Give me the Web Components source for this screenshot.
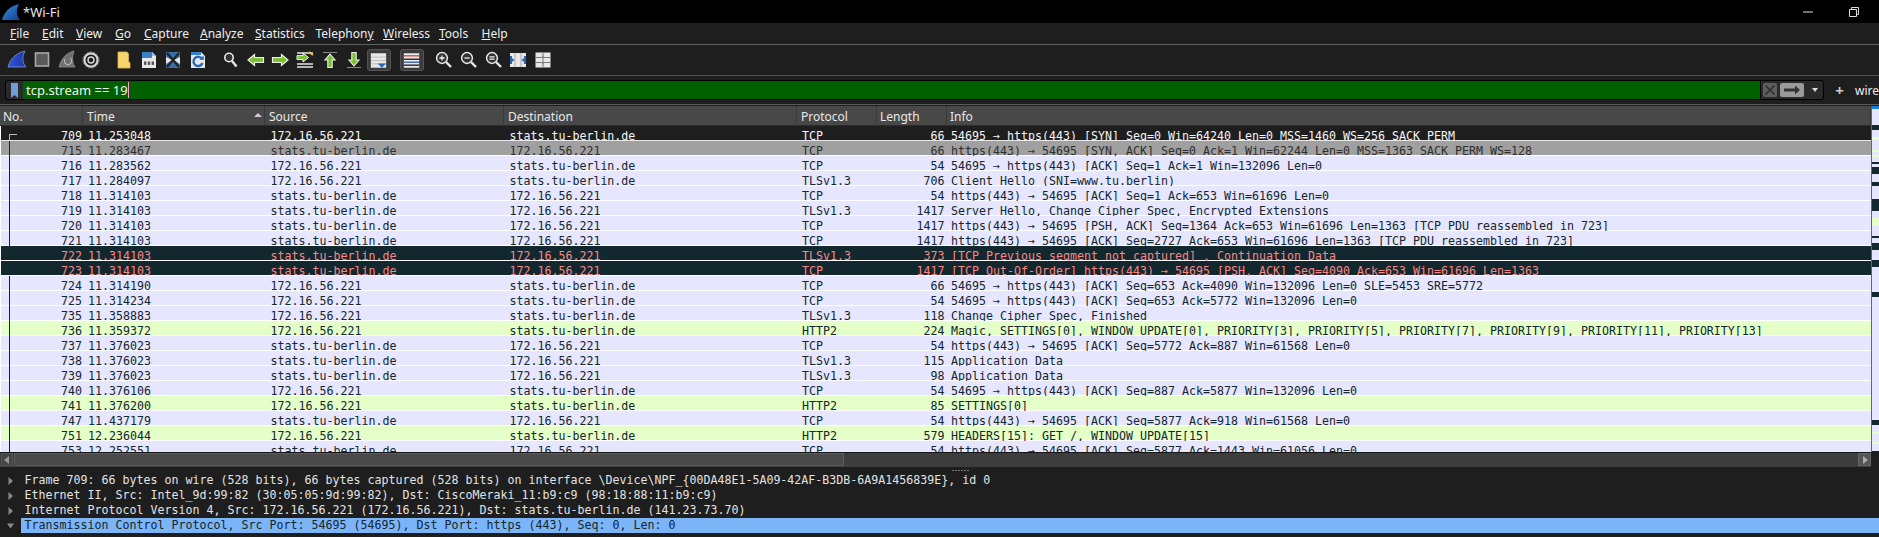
<!DOCTYPE html>
<html>
<head>
<meta charset="utf-8">
<title>Wi-Fi</title>
<style>
    html, body { margin: 0; padding: 0; background: #1e1e1e; }
    body { width: 1879px; height: 537px; overflow: hidden; font-family: "Noto Sans", sans-serif; }
</style>
</head>
<body>
<ws-app></ws-app>
<script>
const MONO = '"DejaVu Sans Mono", monospace';

const ICONS = {
    capture: `<defs><linearGradient id="c" x1="0" y1="0" x2="1" y2="0"><stop offset="0" stop-color="#2a55d8"/><stop offset="1" stop-color="#1c3aa8"/></linearGradient></defs><path d="M1 17C3 9 9 3 18 1 15 7 15 12 19 17Z" fill="url(#c)" stroke="#8fa3c8" stroke-width=".7"/>`,
    stop: `<rect x="3.5" y="3" width="13" height="13" fill="#5a5a5a" stroke="#a8a8a8" stroke-width="1.6"/>`,
    restart: `<path d="M2 17C4 9 9 3 17 1 15 7 15 12 18 17Z" fill="#6f6f6f" stroke="#999" stroke-width=".7"/><path d="M13 8a3.6 3.6 0 1 1-5 1" fill="none" stroke="#b5b5b5" stroke-width="1.3"/>`,
    options: `<circle cx="10" cy="10" r="6.6" fill="none" stroke="#d8d8d8" stroke-width="2.2"/><circle cx="10" cy="10" r="3" fill="none" stroke="#d8d8d8" stroke-width="1.4"/><circle cx="10" cy="10" r="8.2" fill="none" stroke="#888" stroke-width=".8" stroke-dasharray="2 1.4"/>`,
    folder: `<path d="M4 2H13L14.5 4V12L16 12.5V18H4Z" fill="#f6d56b" stroke="#e2b64a" stroke-width=".8"/>`,
    save: `<path d="M3 2H13L17 6V18H3Z" fill="#e8e8e8"/><path d="M3 2H13V8H3Z" fill="#3b7fc4"/><path d="M13 2L17 6H13Z" fill="#9ac0e6"/><rect x="5" y="11.5" width="2.4" height="3.4" fill="#555"/><rect x="8.8" y="11.5" width="2.4" height="3.4" fill="#555"/><rect x="12.6" y="11.5" width="2.4" height="3.4" fill="#555"/>`,
    close: `<path d="M3 2H13L17 6V18H3Z" fill="#e8e8e8"/><path d="M3 2H17V7L11 10 17 14V18H3V14L9 10 3 7Z" fill="#3a6ea5"/><path d="M4 3L16 17M16 3L4 17" stroke="#222" stroke-width="2.2"/>`,
    reload: `<path d="M3 2H13L17 6V18H3Z" fill="#e8e8e8"/><path d="M3 2H13V5H3Z" fill="#3b7fc4"/><path d="M14 9a4.6 4.6 0 1 0 .4 4" fill="none" stroke="#2468b8" stroke-width="2.4"/><path d="M11.5 9.5L16 10 15.5 5.5Z" fill="#2468b8"/>`,
    find: `<circle cx="8" cy="7.5" r="4.2" fill="#333" stroke="#e8e8e8" stroke-width="1.6"/><path d="M11 11L15.5 16.5" stroke="#e8e8e8" stroke-width="2.4"/>`,
    back: `<path d="M2 10L8.5 4.5V7.5H17.5V12.5H8.5V15.5Z" fill="#7cc22e" stroke="#eee" stroke-width="1.2"/>`,
    forward: `<path d="M18 10L11.5 4.5V7.5H2.5V12.5H11.5V15.5Z" fill="#7cc22e" stroke="#eee" stroke-width="1.2"/>`,
    goto: `<path d="M2 3H18M2 14H18M2 17H18" stroke="#e6e6e6" stroke-width="1.4"/><path d="M14 2L18 5" stroke="#e6c84a" stroke-width="2"/><path d="M13.5 7.5L8 3V5.6H2V9.6H8V12Z" fill="#7cc22e" stroke="#eee" stroke-width="1"/>`,
    up: `<path d="M3 2.5H17" stroke="#8a8a8a" stroke-width="1"/><path d="M10 4L15 10H12.2V17.5H7.8V10H5Z" fill="#7cc22e" stroke="#eee" stroke-width="1.1"/>`,
    down: `<path d="M3 17.5H17" stroke="#8a8a8a" stroke-width="1"/><path d="M10 16L15 10H12.2V2.5H7.8V10H5Z" fill="#7cc22e" stroke="#eee" stroke-width="1.1"/>`,
    autoscroll: `<rect x="1" y="1.5" width="18" height="17" fill="#e8e8e8"/><path d="M1 6H19M1 10H19M1 14H19" stroke="#aaa" stroke-width=".8"/><path d="M9 13.5H19L14 18.5Z" fill="#2468b8"/>`,
    colorize: `<rect x="1" y="1.5" width="18" height="17" fill="#ececec"/><path d="M1 4.5H19" stroke="#d8434a" stroke-width="1.6"/><path d="M1 8.5H19" stroke="#1d1d1d" stroke-width="1.6"/><path d="M1 12H19" stroke="#3c55b4" stroke-width="1.6"/><path d="M1 15.5H19" stroke="#1d1d1d" stroke-width="1.6"/>`,
    zoomin: `<circle cx="8" cy="8" r="5.4" fill="#333" stroke="#e8e8e8" stroke-width="1.5"/><path d="M5.4 8H10.6M8 5.4V10.6" stroke="#eee" stroke-width="1.3"/><path d="M12 12L17 17" stroke="#e8e8e8" stroke-width="2.4"/>`,
    zoomout: `<circle cx="8" cy="8" r="5.4" fill="#333" stroke="#e8e8e8" stroke-width="1.5"/><path d="M5.4 8H10.6" stroke="#eee" stroke-width="1.3"/><path d="M12 12L17 17" stroke="#e8e8e8" stroke-width="2.4"/>`,
    zoomreset: `<circle cx="8" cy="8" r="5.4" fill="#333" stroke="#e8e8e8" stroke-width="1.5"/><path d="M5.4 6.8H10.6M5.4 9.2H10.6" stroke="#eee" stroke-width="1.2"/><path d="M12 12L17 17" stroke="#e8e8e8" stroke-width="2.4"/>`,
    resize: `<rect x="2" y="3" width="16" height="14" fill="#e8e8e8"/><path d="M7 3V17M13 3V17" stroke="#999" stroke-width=".8"/><path d="M2 6.5L6.5 10 2 13.5ZM18 6.5L13.5 10 18 13.5Z" fill="#2f66b0"/><rect x="2" y="6" width="2" height="8" fill="#2f66b0"/><rect x="16" y="6" width="2" height="8" fill="#2f66b0"/>`,
    grid: `<rect x="2.5" y="2.5" width="15" height="15" fill="#e8e8e8"/><path d="M2.5 7.5H17.5M2.5 12.5H17.5M10 2.5V17.5" stroke="#777" stroke-width="1"/><path d="M10 5L11.4 7.5H8.6ZM10 15L11.4 12.5H8.6Z" fill="#888"/>`
};

class WsTitleBar extends HTMLElement {
    connectedCallback() {
        this.attachShadow({ mode: 'open' });
        this.shadowRoot.innerHTML = `
            <style>
                :host { display: flex; align-items: center; height: 23px; background: #000; color: #e8e8e8; font: 13px "Noto Sans", sans-serif; }
                svg.logo { width: 18px; height: 16px; margin: 0 3px 0 2px; }
                .name { flex: 1; }
                .win { width: 46px; height: 23px; display: flex; align-items: center; justify-content: center; }
            </style>
            <svg class="logo" viewBox="0 0 18 16"><defs><linearGradient id="t" x1="0" y1="0" x2="1" y2="1"><stop offset="0" stop-color="#3a8fe0"/><stop offset="1" stop-color="#123f8c"/></linearGradient></defs><path d="M0 16C2 8 8 2 17 0 14 6 14 11 18 16Z" fill="url(#t)"/></svg>
            <span class="name"><slot></slot></span>
            <span class="win"><svg width="10" height="10" viewBox="0 0 10 10"><path d="M0 5H10" stroke="#ddd" stroke-width="1"/></svg></span>
            <span class="win" style="margin-right:2px"><svg width="10" height="10" viewBox="0 0 10 10"><path d="M.5 2.5H7.5V9.5H.5ZM2.5 2.5V.5H9.5V7.5H7.5" fill="none" stroke="#ddd" stroke-width="1"/></svg></span>
        `;
    }
}

class WsMenuItem extends HTMLElement {
    connectedCallback() {
        this.attachShadow({ mode: 'open' });
        this.shadowRoot.innerHTML = `
            <style>
                :host { display: block; flex: none; white-space: nowrap; }
            </style>
            <slot></slot>
        `;
        this.style.width = this.getAttribute('w') + 'px';
    }
}

class WsMenuBar extends HTMLElement {
    connectedCallback() {
        this.attachShadow({ mode: 'open' });
        this.shadowRoot.innerHTML = `
            <style>
                :host { display: flex; align-items: center; height: 21px; padding-left: 10px; background: #1e1e1e; color: #eee; font: 12px "Noto Sans", sans-serif; border-bottom: 1px solid #5f5f5f; }
            </style>
            <slot></slot>
        `;
    }
}

class WsToolButton extends HTMLElement {
    connectedCallback() {
        this.attachShadow({ mode: 'open' });
        const checked = this.hasAttribute('checked');
        this.shadowRoot.innerHTML = `
            <style>
                :host { display: flex; flex: none; width: 24.7px; height: 22px; align-items: center; justify-content: center; box-sizing: border-box; }
                svg { width: 20px; height: 20px; }
                .box { display: flex; width: 22px; height: 20px; align-items: center; justify-content: center; border-radius: 3px; }
                .box.on { background: #3c3c3c; border: 1px solid #555; }
                .box.on svg { width: 17px; height: 17px; }
            </style>
            <div class="box ${checked ? 'on' : ''}"><svg viewBox="0 0 20 20">${ICONS[this.getAttribute('icon')]}</svg></div>
        `;
    }
}

class WsToolSep extends HTMLElement {
    connectedCallback() {
        this.attachShadow({ mode: 'open' });
        this.shadowRoot.innerHTML = `<style>:host { display: block; flex: none; width: 8px; }</style>`;
    }
}

class WsToolBar extends HTMLElement {
    connectedCallback() {
        this.attachShadow({ mode: 'open' });
        this.shadowRoot.innerHTML = `
            <style>
                :host { display: flex; align-items: center; height: 30px; padding-left: 5px; background: #1e1e1e; border-bottom: 1px solid #555; box-sizing: content-box; }
            </style>
            <slot></slot>
        `;
    }
}

class WsFilterBar extends HTMLElement {
    connectedCallback() {
        this.attachShadow({ mode: 'open' });
        this.shadowRoot.innerHTML = `
            <style>
                :host { display: flex; align-items: center; height: 29px; padding-left: 5px; box-sizing: border-box; background: #1e1e1e; border-bottom: 1px solid #5a5a5a; }
                .box { display: flex; width: 1823px; height: 20px; box-sizing: border-box; margin-top: 0; background: #2a2a2a; border: 1px solid #000; border-radius: 3px; }
                .mark { display: flex; width: 17px; align-items: center; justify-content: center; }
                .input { display: flex; align-items: center; flex: 1; background: #006000; color: #f2f2f2; font: 13px "Noto Sans", sans-serif; padding-left: 3px; border-right: 1px solid #000; }
                .caret { width: 1px; height: 16px; background: #ff9ad0; margin-left: 0; }
                .btns { display: flex; align-items: center; width: 62px; }
                .x { width: 14px; height: 14px; margin-left: 2px; background: #5e5e5e; border-radius: 2px; }
                .go { width: 24px; height: 14px; margin-left: 3px; background: #9a9a9a; border-radius: 2px; }
                .x svg, .go svg { display: block; }
                .drop { width: 0; height: 0; margin-left: 8px; border: 3px solid transparent; border-top: 4px solid #ddd; border-bottom: 0; }
                .plus { width: 31px; text-align: center; color: #ccc; font: bold 15px "Noto Sans", sans-serif; }
                .wire { color: #eee; font: 12px "Noto Sans", sans-serif; white-space: nowrap; margin-left: 0; }
            </style>
            <div class="box">
                <div class="mark"><svg width="7" height="15" viewBox="0 0 7 15"><path d="M0 0H7V15L3.5 12 0 15Z" fill="#6d9fd8"/></svg></div>
                <div class="input"><slot></slot><span class="caret"></span></div>
                <div class="btns">
                    <div class="x"><svg width="14" height="14" viewBox="0 0 14 14"><path d="M2.5 2.5L11.5 11.5M11.5 2.5L2.5 11.5" stroke="#2b2b2b" stroke-width="1.5"/></svg></div>
                    <div class="go"><svg width="24" height="14" viewBox="0 0 24 14"><path d="M4 5.5H15V2.5L20 7 15 11.5V8.5H4Z" fill="#333"/></svg></div>
                    <div class="drop"></div>
                </div>
            </div>
            <div class="plus">+</div>
            <div class="wire">wire</div>
        `;
    }
}

class WsPacketHeader extends HTMLElement {
    connectedCallback() {
        this.attachShadow({ mode: 'open' });
        const cols = [['No.', 83, 3], ['Time', 182, 4], ['Source', 239, 4], ['Destination', 293, 4], ['Protocol', 80, 4], ['Length', 70, 3], ['Info', 924, 3]];
        this.shadowRoot.innerHTML = `
            <style>
                :host { display: flex; height: 20px; background: #484848; color: #e8e8e8; font: 12px "Noto Sans", sans-serif; }
                div { position: relative; flex: none; box-sizing: border-box; height: 20px; padding-top: 3px; line-height: 16px; border-right: 1px solid #393939; border-bottom: 1px solid #2c2c2c; white-space: nowrap; }
                .sort { position: absolute; left: 171px; top: 7px; width: 0; height: 0; border: 4px solid transparent; border-bottom: 4px solid #ccc; border-top: 0; }
            </style>
            ${cols.map((c, i) => `<div style="width:${c[1]}px;padding-left:${c[2]}px">${c[0]}${i === 1 ? '<span class="sort"></span>' : ''}</div>`).join('')}
        `;
    }
}

class WsPacketRow extends HTMLElement {
    connectedCallback() {
        this.attachShadow({ mode: 'open' });
        const kind = this.getAttribute('kind');
        const d = this.getAttribute('data').split('|');
        const first = kind === 'first';
        const lined = kind === 'tcp' || kind === 'http' || kind === 'gray';
        // rows stack in order, so the next row hides what hangs below the text line
        this.shadowRoot.innerHTML = `
            <style>
                :host { display: flex; position: relative; isolation: isolate; height: 15px; margin-left: 1px; font: 11.63px/14px ${MONO}; white-space: nowrap; }
                :host::after { content: ""; position: absolute; left: 0; right: 0; bottom: 0; height: 1px; background: #fff; z-index: 0; }
                :host([kind=first]) { background: #1e1e1e; color: #f4f4f4; }
                :host([kind=first])::after { background: #e8e8e8; }
                :host([kind=gray]) { background: #a0a0a0; color: #2f2f2f; }
                :host([kind=tcp]) { background: #e7e6ff; color: #12272e; }
                :host([kind=http]) { background: #e4ffc7; color: #12272e; }
                :host([kind=bad]) { background: #12272e; color: #f78787; }
                span { display: block; position: relative; z-index: 1; flex: none; box-sizing: border-box; height: 15px; padding-top: 3px; }
                .no { width: 82px; text-align: right; padding-right: 1px; }
                .time { width: 182px; padding-left: 5px; }
                .src { width: 239px; padding-left: 5.6px; }
                .dst { width: 293px; padding-left: 5.4px; }
                .proto { width: 80px; padding-left: 5px; }
                .len { width: 70px; text-align: right; padding-right: 2.4px; }
                .info { width: 923px; padding-left: 4px; }
                .line { position: absolute; left: 8px; top: 0; width: 1px; height: 15px; background: #12272e; z-index: 3; }
                .bracket { position: absolute; left: 8px; top: 8px; width: 7px; height: 6px; border: 1px solid #bbb; border-width: 1px 0 0 1px; }
            </style>
            ${lined ? '<i class="line"></i>' : ''}${first ? '<i class="bracket"></i>' : ''}
            <span class="no">${d[0]}</span><span class="time">${d[1]}</span><span class="src">${d[2]}</span><span class="dst">${d[3]}</span><span class="proto">${d[4]}</span><span class="len">${d[5]}</span><span class="info">${d[6]}</span>
        `;
    }
}

class WsMinimap extends HTMLElement {
    connectedCallback() {
        this.attachShadow({ mode: 'open' });
        // [height, colour] from the top of the packet pane
        const A = '#e7e6ff', D = '#12272e', G = '#e4ffc7';
        const bands = [[3, '#1c7ed6'], [16, A], [5, D], [7, A], [3, G], [10, A], [2, G], [3, A], [2, G], [5, A], [2, D], [3, A], [7, D], [8, A], [4, D], [13, A], [12, D], [7, A], [8, G], [10, A], [2, D], [5, A], [7, D], [10, A], [7, D], [25, A], [5, D], [123, A], [5, D], [7, A], [2, G], [8, A], [2, G], [7, A]];
        this.shadowRoot.innerHTML = `
            <style>
                :host { display: flex; flex-direction: column; flex: none; width: 7px; height: 346px; overflow: hidden; border-left: 1px solid #666; }
                div { flex: none; }
            </style>
            ${bands.map(b => `<div style="height:${b[0]}px;background:${b[1]}"></div>`).join('')}
        `;
    }
}

class WsHScroll extends HTMLElement {
    connectedCallback() {
        this.attachShadow({ mode: 'open' });
        this.shadowRoot.innerHTML = `
            <style>
                :host { display: flex; height: 14px; padding-left: 1px; width: 1870px; background: #3d3d3d; border-top: 1px solid #161616; }
                .btn { flex: none; width: 12px; height: 13px; background: #444; border: 1px solid #555; box-sizing: border-box; display: flex; align-items: center; justify-content: center; }
                .thumb { flex: none; width: 830px; height: 13px; margin-left: 1px; background: #4a4a4a; border: 1px solid #5c5c5c; box-sizing: border-box; }
                .track { flex: 1; }
            </style>
            <div class="btn"><svg width="6" height="8" viewBox="0 0 6 8"><path d="M5 0V8L0 4Z" fill="#999"/></svg></div>
            <div class="thumb"></div>
            <div class="track"></div>
            <div class="btn" style="width:13px;background:#555;border-color:#666"><svg width="6" height="8" viewBox="0 0 6 8"><path d="M1 0V8L6 4Z" fill="#aaa"/></svg></div>
        `;
    }
}

class WsSplitter extends HTMLElement {
    connectedCallback() {
        this.attachShadow({ mode: 'open' });
        this.shadowRoot.innerHTML = `
            <style>
                :host { display: flex; height: 6px; align-items: center; justify-content: center; background: #1e1e1e; padding-left: 43px; }
                i { width: 18px; height: 1px; background: repeating-linear-gradient(90deg, #777 0 2px, transparent 2px 3px); }
            </style>
            <i></i>
        `;
    }
}

class WsDetailRow extends HTMLElement {
    connectedCallback() {
        this.attachShadow({ mode: 'open' });
        const open = this.hasAttribute('selected');
        this.shadowRoot.innerHTML = `
            <style>
                :host { display: flex; height: 15px; color: #e2e2e2; font: 11.63px/15px ${MONO}; white-space: nowrap; }
                .arrow { flex: none; width: 21px; display: flex; align-items: center; justify-content: center; padding-left: 0; }
                .text { flex: 1; padding-left: 3.5px; }
                :host([selected]) .text { background: #7cb4f8; color: #12272e; }
            </style>
            <div class="arrow"><svg width="7" height="8" viewBox="0 0 7 8"><path d="${open ? 'M0 1.5H7L3.5 6.5Z' : 'M1.5 0L6 4 1.5 8Z'}" fill="#8a8a8a"/></svg></div>
            <div class="text"><slot></slot></div>
        `;
    }
}

class WsPacketPane extends HTMLElement {
    connectedCallback() {
        this.attachShadow({ mode: 'open' });
        const A = '172.16.56.221', S = 'stats.tu-berlin.de';
        const up = (no, t, proto, len, info, kind) => [kind || 'tcp', [no, t, A, S, proto, len, info]];
        const dn = (no, t, proto, len, info, kind) => [kind || 'tcp', [no, t, S, A, proto, len, info]];
        const rows = [
            up(709, '11.253048', 'TCP', 66, '54695 → https(443) [SYN] Seq=0 Win=64240 Len=0 MSS=1460 WS=256 SACK_PERM', 'first'),
            dn(715, '11.283467', 'TCP', 66, 'https(443) → 54695 [SYN, ACK] Seq=0 Ack=1 Win=62244 Len=0 MSS=1363 SACK_PERM WS=128', 'gray'),
            up(716, '11.283562', 'TCP', 54, '54695 → https(443) [ACK] Seq=1 Ack=1 Win=132096 Len=0'),
            up(717, '11.284097', 'TLSv1.3', 706, 'Client Hello (SNI=www.tu.berlin)'),
            dn(718, '11.314103', 'TCP', 54, 'https(443) → 54695 [ACK] Seq=1 Ack=653 Win=61696 Len=0'),
            dn(719, '11.314103', 'TLSv1.3', 1417, 'Server Hello, Change Cipher Spec, Encrypted Extensions'),
            dn(720, '11.314103', 'TCP', 1417, 'https(443) → 54695 [PSH, ACK] Seq=1364 Ack=653 Win=61696 Len=1363 [TCP PDU reassembled in 723]'),
            dn(721, '11.314103', 'TCP', 1417, 'https(443) → 54695 [ACK] Seq=2727 Ack=653 Win=61696 Len=1363 [TCP PDU reassembled in 723]'),
            dn(722, '11.314103', 'TLSv1.3', 373, '[TCP Previous segment not captured] , Continuation Data', 'bad'),
            dn(723, '11.314103', 'TCP', 1417, '[TCP Out-Of-Order] https(443) → 54695 [PSH, ACK] Seq=4090 Ack=653 Win=61696 Len=1363', 'bad'),
            up(724, '11.314190', 'TCP', 66, '54695 → https(443) [ACK] Seq=653 Ack=4090 Win=132096 Len=0 SLE=5453 SRE=5772'),
            up(725, '11.314234', 'TCP', 54, '54695 → https(443) [ACK] Seq=653 Ack=5772 Win=132096 Len=0'),
            up(735, '11.358883', 'TLSv1.3', 118, 'Change Cipher Spec, Finished'),
            up(736, '11.359372', 'HTTP2', 224, 'Magic, SETTINGS[0], WINDOW_UPDATE[0], PRIORITY[3], PRIORITY[5], PRIORITY[7], PRIORITY[9], PRIORITY[11], PRIORITY[13]', 'http'),
            dn(737, '11.376023', 'TCP', 54, 'https(443) → 54695 [ACK] Seq=5772 Ack=887 Win=61568 Len=0'),
            dn(738, '11.376023', 'TLSv1.3', 115, 'Application Data'),
            dn(739, '11.376023', 'TLSv1.3', 98, 'Application Data'),
            up(740, '11.376106', 'TCP', 54, '54695 → https(443) [ACK] Seq=887 Ack=5877 Win=132096 Len=0'),
            up(741, '11.376200', 'HTTP2', 85, 'SETTINGS[0]', 'http'),
            dn(747, '11.437179', 'TCP', 54, 'https(443) → 54695 [ACK] Seq=5877 Ack=918 Win=61568 Len=0'),
            up(751, '12.236044', 'HTTP2', 579, 'HEADERS[15]: GET /, WINDOW_UPDATE[15]', 'http'),
            dn(753, '12.252551', 'TCP', 54, 'https(443) → 54695 [ACK] Seq=5877 Ack=1443 Win=61056 Len=0')
        ];
        this.shadowRoot.innerHTML = `
            <style>
                :host { display: flex; height: 346px; background: #1e1e1e; }
                .main { flex: none; width: 1871px; }
                .rows { height: 326px; overflow: hidden; background: #fff; }
            </style>
            <div class="main">
                <ws-packet-header></ws-packet-header>
                <div class="rows">
                    ${rows.map(r => `<ws-packet-row kind="${r[0]}" data="${r[1].join('|')}"></ws-packet-row>`).join('')}
                </div>
            </div>
            <ws-minimap></ws-minimap>
        `;
    }
}

class WsApp extends HTMLElement {
    connectedCallback() {
        this.attachShadow({ mode: 'open' });
        const menu = [['<u>F</u>ile', 32], ['<u>E</u>dit', 34], ['<u>V</u>iew', 39], ['<u>G</u>o', 29], ['<u>C</u>apture', 56], ['<u>A</u>nalyze', 55], ['<u>S</u>tatistics', 60.5], ['Telephon<u>y</u>', 67.5], ['<u>W</u>ireless', 56], ['<u>T</u>ools', 42.5], ['<u>H</u>elp', 30]];
        const tools = ['capture', 'stop', 'restart', 'options', '-', 'folder', 'save', 'close', 'reload', '-', 'find', 'back', 'forward', 'goto', 'up', 'down', 'autoscroll*', '-', 'colorize*', '-', 'zoomin', 'zoomout', 'zoomreset', 'resize', 'grid'];
        this.shadowRoot.innerHTML = `
            <style>
                :host { display: block; width: 1879px; height: 537px; overflow: hidden; background: #1e1e1e; }
                .gap { height: 1px; background: #1e1e1e; }
                .tree { display: block; height: 64px; padding-top: 0; background: #1e1e1e; }
            </style>
            <ws-title-bar>*Wi-Fi</ws-title-bar>
            <ws-menu-bar>${menu.map(m => `<ws-menu-item w="${m[1]}">${m[0]}</ws-menu-item>`).join('')}</ws-menu-bar>
            <ws-tool-bar>${tools.map(t => t === '-' ? '<ws-tool-sep></ws-tool-sep>'
                : `<ws-tool-button icon="${t.replace('*', '')}" ${t.endsWith('*') ? 'checked' : ''}></ws-tool-button>`).join('')}</ws-tool-bar>
            <ws-filter-bar>tcp.stream == 19</ws-filter-bar>
            <div class="gap"></div>
            <ws-packet-pane></ws-packet-pane>
            <ws-h-scroll></ws-h-scroll>
            <ws-splitter></ws-splitter>
            <div class="tree">
                <ws-detail-row>Frame 709: 66 bytes on wire (528 bits), 66 bytes captured (528 bits) on interface \\Device\\NPF_{00DA48E1-5A09-42AF-B3DB-6A9A1456839E}, id 0</ws-detail-row>
                <ws-detail-row>Ethernet II, Src: Intel_9d:99:82 (30:05:05:9d:99:82), Dst: CiscoMeraki_11:b9:c9 (98:18:88:11:b9:c9)</ws-detail-row>
                <ws-detail-row>Internet Protocol Version 4, Src: 172.16.56.221 (172.16.56.221), Dst: stats.tu-berlin.de (141.23.73.70)</ws-detail-row>
                <ws-detail-row selected>Transmission Control Protocol, Src Port: 54695 (54695), Dst Port: https (443), Seq: 0, Len: 0</ws-detail-row>
            </div>
        `;
    }
}

customElements.define('ws-title-bar', WsTitleBar);
customElements.define('ws-menu-item', WsMenuItem);
customElements.define('ws-menu-bar', WsMenuBar);
customElements.define('ws-tool-button', WsToolButton);
customElements.define('ws-tool-sep', WsToolSep);
customElements.define('ws-tool-bar', WsToolBar);
customElements.define('ws-filter-bar', WsFilterBar);
customElements.define('ws-packet-header', WsPacketHeader);
customElements.define('ws-packet-row', WsPacketRow);
customElements.define('ws-minimap', WsMinimap);
customElements.define('ws-h-scroll', WsHScroll);
customElements.define('ws-splitter', WsSplitter);
customElements.define('ws-detail-row', WsDetailRow);
customElements.define('ws-packet-pane', WsPacketPane);
customElements.define('ws-app', WsApp);
</script>
</body>
</html>
